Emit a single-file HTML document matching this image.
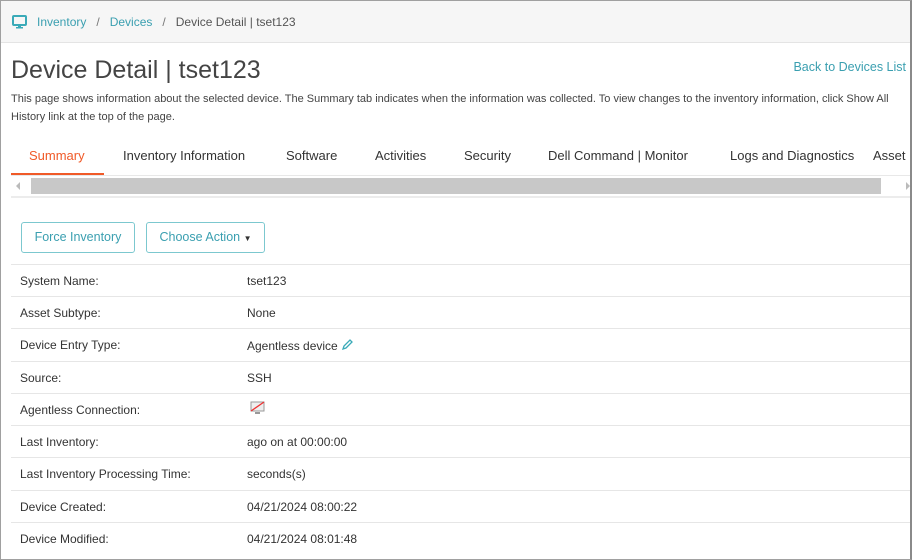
<!DOCTYPE html>
<html><head><meta charset="utf-8"><style>
*{margin:0;padding:0;box-sizing:border-box}
body{width:912px;height:560px;overflow:hidden;background:#fff;font-family:"Liberation Sans",sans-serif;color:#333;position:relative}
.frame{position:absolute;left:0;top:0;width:912px;height:560px;border:1px solid #a0a0a0;border-right:2px solid #8a8a8a;pointer-events:none}
.bc{position:absolute;left:1px;top:1px;width:909px;height:42px;background:#f6f6f6;border-bottom:1px solid #e4e4e4;font-size:12px;line-height:42px;padding-left:36px;color:#555}
.bc a{color:#3a9fb0;text-decoration:none}
.bc .s{margin:0 10px;color:#777}
.abs{position:absolute;white-space:nowrap}
h1{position:absolute;left:11px;top:56px;font-size:25px;font-weight:normal;color:#444}
.desc{position:absolute;left:11px;top:90px;width:895px;font-size:11px;line-height:18px;color:#444}
.tabs{font-size:13px;color:#333;top:148px}
.row{position:absolute;left:11px;width:899px;height:32px;border-top:1px solid #e6e6e6;font-size:12px;color:#333}
.row span{position:absolute;top:9px}
.btn{position:absolute;top:222px;height:31px;border:1.5px solid #7cc8cf;border-radius:3px;font-size:12.5px;color:#3a9fb0;line-height:28px;text-align:center}
</style></head><body>
<div class="bc">
<svg style="position:absolute;left:11px;top:14px" width="15" height="14" viewBox="0 0 15 14"><rect x="1" y="1" width="13" height="9" rx="1" fill="none" stroke="#3aaab8" stroke-width="2"/><rect x="6" y="10" width="3" height="2" fill="#3aaab8"/><rect x="4" y="12" width="7" height="1.5" fill="#3aaab8"/></svg>
<a>Inventory</a><span class="s">/</span><a>Devices</a><span class="s">/</span>Device Detail | tset123</div>
<h1>Device Detail | tset123</h1>
<div class="abs" style="right:6px;top:60px;font-size:12.5px;color:#3a9fb0">Back to Devices List</div>
<div class="desc">This page shows information about the selected device. The Summary tab indicates when the information was collected. To view changes to the inventory information, click Show All History link at the top of the page.</div>
<div class="abs tabs" style="left:29px;color:#f05a28">Summary</div>
<div class="abs tabs" style="left:123px">Inventory Information</div>
<div class="abs tabs" style="left:286px">Software</div>
<div class="abs tabs" style="left:375px">Activities</div>
<div class="abs tabs" style="left:464px">Security</div>
<div class="abs tabs" style="left:548px">Dell Command | Monitor</div>
<div class="abs tabs" style="left:730px">Logs and Diagnostics</div>
<div class="abs tabs" style="left:873px">Asset</div>
<div class="abs" style="left:11px;top:173px;width:93px;height:2px;background:#f05a28"></div>
<div class="abs" style="left:11px;top:175px;width:899px;height:1px;background:#e8e8e8"></div>
<div class="abs" style="left:16px;top:182px;width:0;height:0;border:4px solid transparent;border-right-color:#bbb;border-left:0"></div>
<div class="abs" style="left:31px;top:178px;width:850px;height:16px;background:#c8c8c8"></div>
<div class="abs" style="left:906px;top:182px;width:0;height:0;border:4px solid transparent;border-left-color:#bbb;border-right:0"></div>
<div class="abs" style="left:11px;top:196px;width:899px;height:2px;background:#ececec"></div>
<div class="btn" style="left:21px;width:114px">Force Inventory</div>
<div class="btn" style="left:146px;width:119px">Choose Action <span style="font-size:8px;color:#333">▼</span></div>
<div class="row" style="top:264px"><span style="left:9px">System Name:</span><span style="left:236px">tset123</span></div>
<div class="row" style="top:296px"><span style="left:9px">Asset Subtype:</span><span style="left:236px">None</span></div>
<div class="row" style="top:328px"><span style="left:9px">Device Entry Type:</span><span style="left:236px">Agentless device <svg width="13" height="13" viewBox="0 0 13 13" style="vertical-align:-1px"><path d="M2 11l1-3 6-6 2 2-6 6z" fill="none" stroke="#3aaab8" stroke-width="1.3"/></svg></span></div>
<div class="row" style="top:361px"><span style="left:9px">Source:</span><span style="left:236px">SSH</span></div>
<div class="row" style="top:393px"><span style="left:9px">Agentless Connection:</span><span style="left:239px;top:7px"><svg width="16" height="14" viewBox="0 0 16 14"><rect x="1" y="1" width="13" height="9" fill="#eee" stroke="#999"/><rect x="5" y="11" width="5" height="2" fill="#999"/><line x1="1" y1="10" x2="14" y2="1" stroke="#e33" stroke-width="1.3"/></svg></span></div>
<div class="row" style="top:425px"><span style="left:9px">Last Inventory:</span><span style="left:236px">ago on at 00:00:00</span></div>
<div class="row" style="top:457px"><span style="left:9px">Last Inventory Processing Time:</span><span style="left:236px">seconds(s)</span></div>
<div class="row" style="top:490px"><span style="left:9px">Device Created:</span><span style="left:236px">04/21/2024 08:00:22</span></div>
<div class="row" style="top:522px"><span style="left:9px">Device Modified:</span><span style="left:236px">04/21/2024 08:01:48</span></div>
<div class="frame"></div>
</body></html>
